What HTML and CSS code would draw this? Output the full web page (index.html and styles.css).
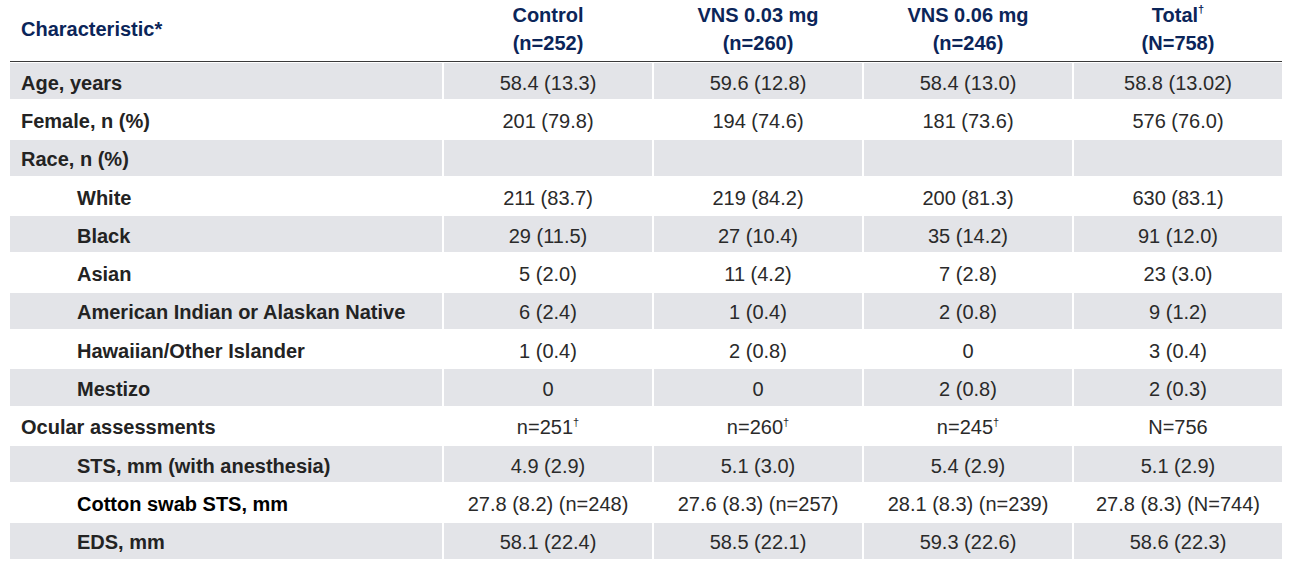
FILE: index.html
```html
<!DOCTYPE html>
<html lang="en">
<head>
<meta charset="utf-8">
<title>Baseline characteristics</title>
<link rel="stylesheet" href="styles.css">
</head>
<body>
<div class="table" role="table">
  <div class="thead" role="row">
    <div class="th th-label" role="columnheader">Characteristic*</div>
    <div class="th" role="columnheader">Control<br>(n=252)</div>
    <div class="th" role="columnheader">VNS 0.03 mg<br>(n=260)</div>
    <div class="th" role="columnheader">VNS 0.06 mg<br>(n=246)</div>
    <div class="th" role="columnheader">Total<sup>†</sup><br>(N=758)</div>
  </div>
  <div class="tbody">
    <div class="row shade" role="row">
      <div class="cell label">Age, years</div>
      <div class="cell">58.4 (13.3)</div>
      <div class="cell">59.6 (12.8)</div>
      <div class="cell">58.4 (13.0)</div>
      <div class="cell">58.8 (13.02)</div>
    </div>
    <div class="row" role="row">
      <div class="cell label">Female, n (%)</div>
      <div class="cell">201 (79.8)</div>
      <div class="cell">194 (74.6)</div>
      <div class="cell">181 (73.6)</div>
      <div class="cell">576 (76.0)</div>
    </div>
    <div class="row shade" role="row">
      <div class="cell label">Race, n (%)</div>
      <div class="cell"></div>
      <div class="cell"></div>
      <div class="cell"></div>
      <div class="cell"></div>
    </div>
    <div class="row" role="row">
      <div class="cell label sub">White</div>
      <div class="cell">211 (83.7)</div>
      <div class="cell">219 (84.2)</div>
      <div class="cell">200 (81.3)</div>
      <div class="cell">630 (83.1)</div>
    </div>
    <div class="row shade" role="row">
      <div class="cell label sub">Black</div>
      <div class="cell">29 (11.5)</div>
      <div class="cell">27 (10.4)</div>
      <div class="cell">35 (14.2)</div>
      <div class="cell">91 (12.0)</div>
    </div>
    <div class="row" role="row">
      <div class="cell label sub">Asian</div>
      <div class="cell">5 (2.0)</div>
      <div class="cell">11 (4.2)</div>
      <div class="cell">7 (2.8)</div>
      <div class="cell">23 (3.0)</div>
    </div>
    <div class="row shade" role="row">
      <div class="cell label sub">American Indian or Alaskan Native</div>
      <div class="cell">6 (2.4)</div>
      <div class="cell">1 (0.4)</div>
      <div class="cell">2 (0.8)</div>
      <div class="cell">9 (1.2)</div>
    </div>
    <div class="row" role="row">
      <div class="cell label sub">Hawaiian/Other Islander</div>
      <div class="cell">1 (0.4)</div>
      <div class="cell">2 (0.8)</div>
      <div class="cell">0</div>
      <div class="cell">3 (0.4)</div>
    </div>
    <div class="row shade" role="row">
      <div class="cell label sub">Mestizo</div>
      <div class="cell">0</div>
      <div class="cell">0</div>
      <div class="cell">2 (0.8)</div>
      <div class="cell">2 (0.3)</div>
    </div>
    <div class="row" role="row">
      <div class="cell label">Ocular assessments</div>
      <div class="cell">n=251<sup>†</sup></div>
      <div class="cell">n=260<sup>†</sup></div>
      <div class="cell">n=245<sup>†</sup></div>
      <div class="cell">N=756</div>
    </div>
    <div class="row shade" role="row">
      <div class="cell label sub">STS, mm (with anesthesia)</div>
      <div class="cell">4.9 (2.9)</div>
      <div class="cell">5.1 (3.0)</div>
      <div class="cell">5.4 (2.9)</div>
      <div class="cell">5.1 (2.9)</div>
    </div>
    <div class="row" role="row">
      <div class="cell label sub strong">Cotton swab STS, mm</div>
      <div class="cell">27.8 (8.2) (n=248)</div>
      <div class="cell">27.6 (8.3) (n=257)</div>
      <div class="cell">28.1 (8.3) (n=239)</div>
      <div class="cell">27.8 (8.3) (N=744)</div>
    </div>
    <div class="row shade" role="row">
      <div class="cell label sub">EDS, mm</div>
      <div class="cell">58.1 (22.4)</div>
      <div class="cell">58.5 (22.1)</div>
      <div class="cell">59.3 (22.6)</div>
      <div class="cell">58.6 (22.3)</div>
    </div>
  </div>
</div>
</body>
</html>
```

FILE: styles.css
```css
html, body {
  margin: 0;
  padding: 0;
  background: #ffffff;
}

body {
  font-family: "Liberation Sans", Arial, Helvetica, sans-serif;
  font-size: 20px;
  color: #2a2a2a;
}

.table {
  width: 1272px;
  margin-left: 10px;
  display: flex;
  flex-direction: column;
}

.thead,
.tbody {
  display: grid;
  grid-template-columns: 432px repeat(4, 208px);
  column-gap: 2px;
}

.thead {
  border-bottom: 1px solid #3a3a3a;
  padding-top: 2px;
  padding-bottom: 4px;
}

.th {
  font-weight: bold;
  color: #0b2559;
  line-height: 27.5px;
  text-align: center;
}

.th-label {
  text-align: left;
  align-self: center;
  padding-left: 11px;
}

.tbody {
  row-gap: 2px;
  grid-auto-rows: 36.3px;
  padding-top: 1px;
}

.row {
  display: contents;
}

.cell {
  display: flex;
  align-items: center;
  justify-content: center;
  padding-top: 4px;
  white-space: nowrap;
}

.row.shade > .cell {
  background: #e3e4e8;
}

.cell.label {
  justify-content: flex-start;
  padding-left: 11px;
  font-weight: bold;
  color: #232323;
}

.cell.label.sub {
  padding-left: 67px;
}

.cell.label.strong {
  color: #000000;
}

sup {
  font-size: 0.55em;
  line-height: 0;
  position: relative;
  top: -0.1em;
  vertical-align: super;
}

.cell sup {
  align-self: flex-start;
  margin-top: 10px;
  top: 0;
  vertical-align: baseline;
}
```
